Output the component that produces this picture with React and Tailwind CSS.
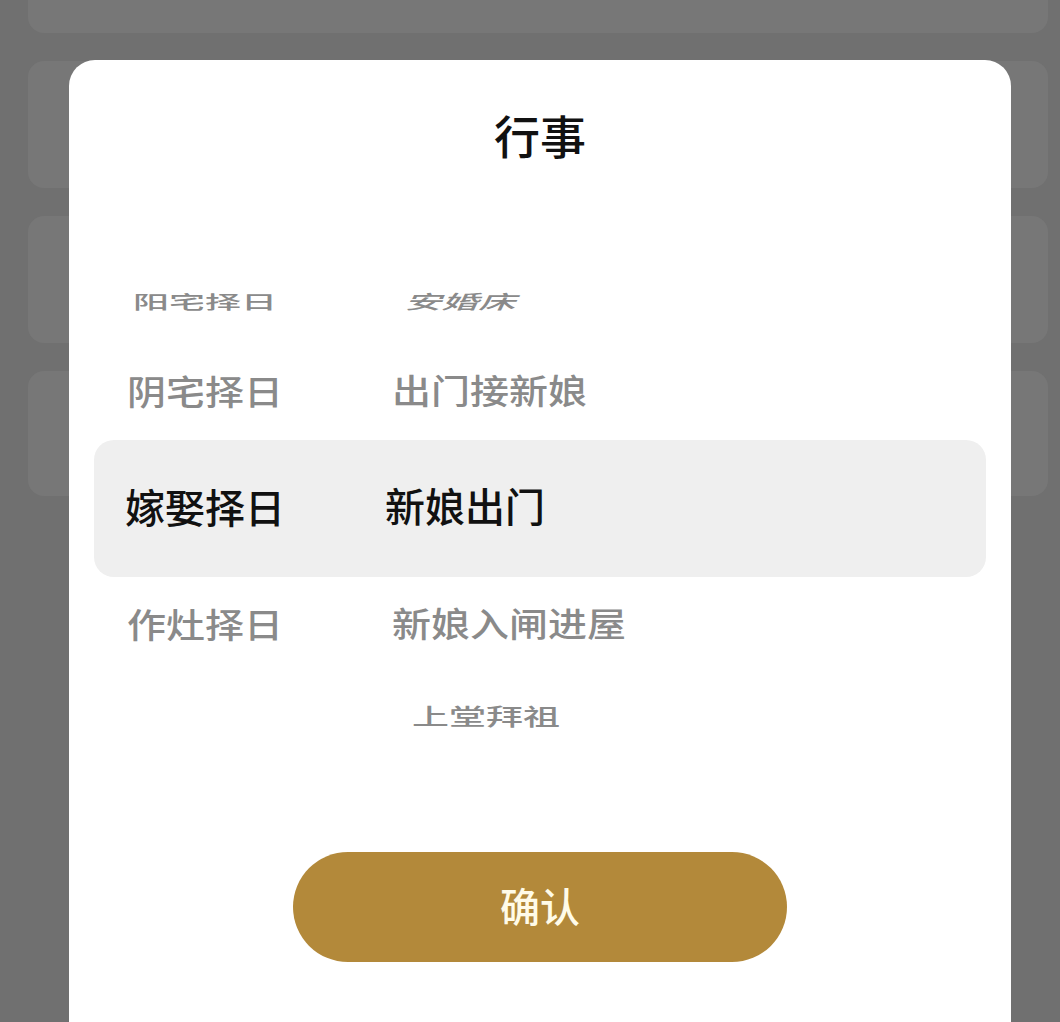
import React from "react";

const font = { fontFamily: '"Noto Sans CJK SC", "Noto Sans", sans-serif' };

export default function App() {
  return (
    <div
      className="relative w-[1060px] h-[1022px] overflow-hidden bg-[#707070]"
      style={font}
    >
      {/* background list cards */}
      <div className="flex flex-col gap-[28px] mt-[-94px] ml-[28px] mr-[12px]">
        <div className="h-[127px] rounded-[16px] bg-[#777777]" />
        <div className="h-[127px] rounded-[16px] bg-[#777777]" />
        <div className="h-[127px] rounded-[16px] bg-[#777777]" />
        <div className="h-[125px] rounded-[16px] bg-[#777777]" />
      </div>

      {/* modal */}
      <div className="absolute left-[69px] top-[60px] w-[942px] h-[990px] rounded-[26px] bg-white flex flex-col font-medium">
        <div className="h-[196px] pt-[51px] flex justify-center">
          <div className="text-[46px] leading-[46px] text-[#111111]">行事</div>
        </div>

        {/* picker */}
        <div className="flex flex-col">
          {/* row -2 */}
          <div className="h-[90px] flex items-center text-[#8a8a8a]">
            <div className="w-[272px] flex justify-center">
              <span className="text-[36px] leading-none scale-y-[0.52] inline-block">阳宅择日</span>
            </div>
            <div className="pl-[67px]">
              <span className="text-[37px] leading-none scale-y-[0.52] -skew-x-[14deg] inline-block">安婚床</span>
            </div>
          </div>
          {/* row -1 */}
          <div className="h-[94px] pb-[6px] flex items-center text-[#8a8a8a]">
            <div className="w-[272px] flex justify-center">
              <span className="text-[39px] leading-none scale-y-[0.86] inline-block">阴宅择日</span>
            </div>
            <div className="pl-[51px]">
              <span className="text-[39px] leading-none scale-y-[0.86] inline-block">出门接新娘</span>
            </div>
          </div>
          {/* row 0 selected */}
          <div className="h-[137px] pb-[6px] mx-[25px] rounded-[20px] bg-[#efefef] flex items-center text-[#111111]">
            <div className="w-[222px] flex justify-center">
              <span className="text-[40px] leading-none inline-block">嫁娶择日</span>
            </div>
            <div className="pl-[69px]">
              <span className="text-[40px] leading-none inline-block">新娘出门</span>
            </div>
          </div>
          {/* row +1 */}
          <div className="h-[98px] pb-[6px] flex items-center text-[#8a8a8a]">
            <div className="w-[272px] flex justify-center">
              <span className="text-[39px] leading-none scale-y-[0.86] inline-block">作灶择日</span>
            </div>
            <div className="pl-[51px]">
              <span className="text-[39px] leading-none scale-y-[0.86] inline-block">新娘入闸进屋</span>
            </div>
          </div>
          {/* row +2 */}
          <div className="h-[82px] flex items-center text-[#8a8a8a]">
            <div className="w-[272px]" />
            <div className="pl-[71px]">
              <span className="text-[37px] leading-none scale-y-[0.6] inline-block">上堂拜祖</span>
            </div>
          </div>
        </div>

        <div className="mt-[95px] flex justify-center">
          <button className="w-[494px] h-[110px] pb-[4px] rounded-full bg-[#b3893a] text-[#fffbe8] text-[40px] leading-none flex items-center justify-center font-medium">
            确认
          </button>
        </div>
      </div>
    </div>
  );
}
